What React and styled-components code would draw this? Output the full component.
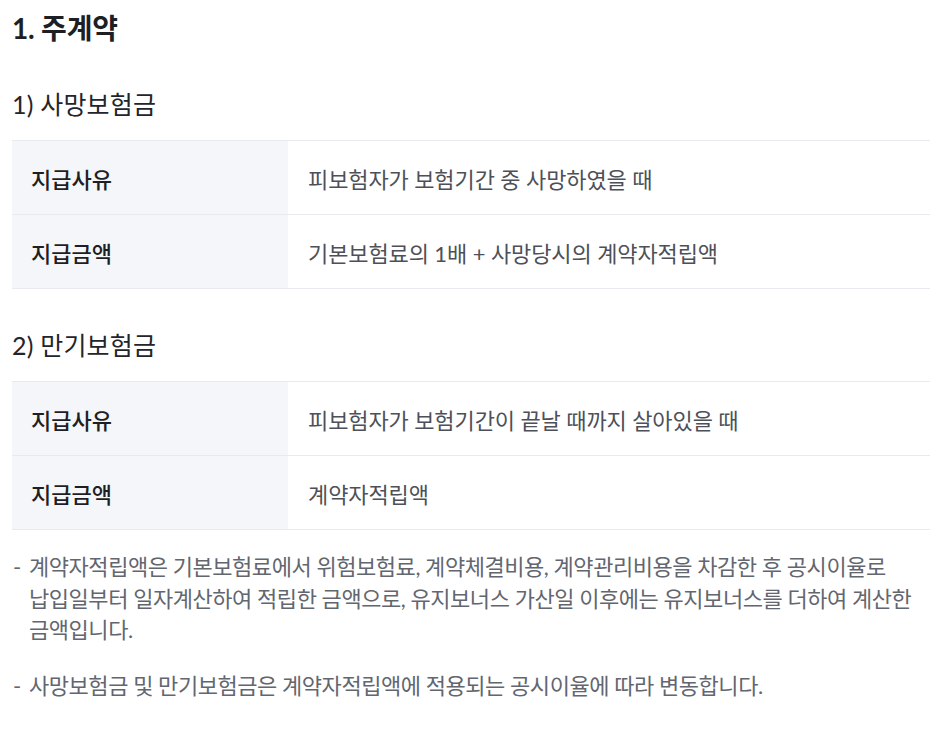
import React from "react";
import styled, { createGlobalStyle } from "styled-components";

const GlobalStyle = createGlobalStyle`
  body {
    margin: 0;
    background: #fff;
    font-family: "Lato", "Noto Sans CJK KR", sans-serif;
    word-break: keep-all;
  }
`;

const sections = [
  {
    title: "1) 사망보험금",
    rows: [
      ["지급사유", "피보험자가 보험기간 중 사망하였을 때"],
      ["지급금액", "기본보험료의 1배 + 사망당시의 계약자적립액"],
    ],
  },
  {
    title: "2) 만기보험금",
    rows: [
      ["지급사유", "피보험자가 보험기간이 끝날 때까지 살아있을 때"],
      ["지급금액", "계약자적립액"],
    ],
  },
];

const notes = [
  "계약자적립액은 기본보험료에서 위험보험료, 계약체결비용, 계약관리비용을 차감한 후 공시이율로 납입일부터 일자계산하여 적립한 금액으로, 유지보너스 가산일 이후에는 유지보너스를 더하여 계산한 금액입니다.",
  "사망보험금 및 만기보험금은 계약자적립액에 적용되는 공시이율에 따라 변동합니다.",
];

const App = () => {
  return (
    <Page>
      <GlobalStyle />
      <Title>1. 주계약</Title>
      {sections.map((s) => (
        <Section key={s.title}>
          <SubTitle>{s.title}</SubTitle>
          <Table>
            {s.rows.map(([label, value]) => (
              <Row key={label}>
                <Label>{label}</Label>
                <Value>{value}</Value>
              </Row>
            ))}
          </Table>
        </Section>
      ))}
      <Notes>
        {notes.map((n) => (
          <Note key={n}>{n}</Note>
        ))}
      </Notes>
    </Page>
  );
};
export default App;

const Page = styled.div`
  padding: 8px 0 20px 12px;
`;

const Title = styled.h1`
  margin: 0;
  font-size: 28px;
  font-weight: 700;
  line-height: 40px;
  color: #1e1f24;
  letter-spacing: -0.2px;
`;

const Section = styled.section`
  margin-top: 38px;
`;

const SubTitle = styled.h2`
  margin: 0 0 18px;
  font-size: 25px;
  font-weight: 400;
  line-height: 36px;
  color: #23252b;
  letter-spacing: 0.2px;
`;

const Table = styled.div`
  border-top: 1px solid #e9eaef;
`;

const Row = styled.div`
  display: grid;
  grid-template-columns: 276px 1fr;
  height: 74px;
  border-bottom: 1px solid #e9eaef;
  box-sizing: border-box;
`;

const Label = styled.div`
  display: flex;
  align-items: center;
  padding-left: 19px;
  background: #f5f6fa;
  font-size: 22px;
  font-weight: 500;
  color: #1e1f24;
`;

const Value = styled.div`
  display: flex;
  align-items: center;
  padding-left: 20px;
  font-size: 22px;
  color: #4d5058;
  letter-spacing: -0.1px;
`;

const Notes = styled.ul`
  list-style: none;
  margin: 21px 0 0;
  padding: 0;
  display: flex;
  flex-direction: column;
  gap: 24px;
`;

const Note = styled.li`
  position: relative;
  padding-left: 17px;
  font-size: 22px;
  line-height: 31.5px;
  color: #62666f;
  letter-spacing: -0.45px;
  &::before {
    content: "-";
    position: absolute;
    left: 1px;
    top: 0;
  }
`;
